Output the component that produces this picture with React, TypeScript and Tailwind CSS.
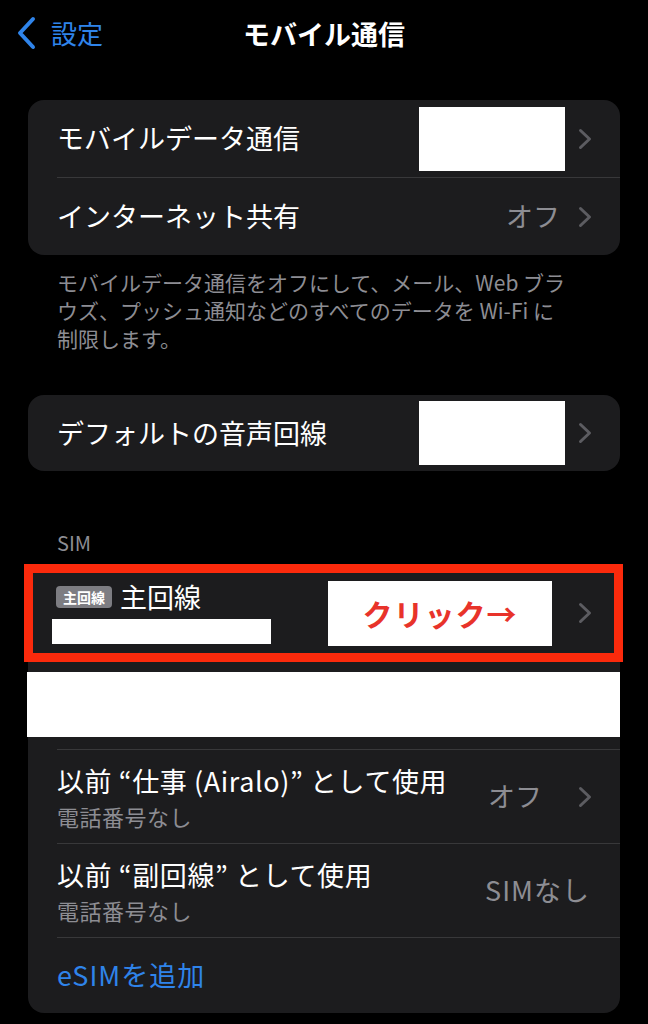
import React from "react";

const Chevron = () => (
  <svg width="14" height="22" viewBox="0 0 14 22" className="shrink-0">
    <polyline points="2.5,2.5 11.5,11 2.5,19.5" fill="none" stroke="#5c5c61" strokeWidth="3" strokeLinecap="round" strokeLinejoin="round" />
  </svg>
);

const Sep = () => <div className="ml-[29px] h-px bg-[#38383a]" />;

export default function App() {
  return (
    <div
      className="w-[648px] h-[1024px] bg-black overflow-hidden text-white"
      style={{ fontFamily: '"Noto Sans CJK JP", "Noto Sans", sans-serif' }}
    >
      {/* Nav */}
      <div className="grid grid-cols-[1fr_auto_1fr] items-center h-[66px]">
        <div className="flex items-center pl-[15px] gap-[14px] text-[#2f84ea]">
          <svg width="22" height="34" viewBox="0 0 22 34">
            <polyline points="18,3 5,17 18,31" fill="none" stroke="#2f84ea" strokeWidth="4" strokeLinecap="round" strokeLinejoin="round" />
          </svg>
          <span className="text-[26px] leading-none">設定</span>
        </div>
        <div className="text-[27px] font-semibold leading-none">モバイル通信</div>
        <div />
      </div>

      {/* Card 1 */}
      <div className="mx-[28px] mt-[34px] rounded-[16px] bg-[#1c1c1e]">
        <div className="flex items-center h-[77px] pl-[29px] pr-[28px]">
          <span className="text-[27px] flex-1">モバイルデータ通信</span>
          <div className="w-[146px] h-[64px] bg-white mr-[13px]" />
          <Chevron />
        </div>
        <Sep />
        <div className="flex items-center h-[77px] pl-[29px] pr-[28px]">
          <span className="text-[27px] flex-1">インターネット共有</span>
          <span className="text-[27px] text-[#8d8d93] mr-[18px]">オフ</span>
          <Chevron />
        </div>
      </div>

      <p className="px-[57px] mt-[13px] text-[21px] leading-[28px] text-[#8d8d93]">
        モバイルデータ通信をオフにして、メール、Web ブラ
        <br />
        ウズ、プッシュ通知などのすべてのデータを Wi-Fi に
        <br />
        制限します。
      </p>

      {/* Card 2 */}
      <div className="mx-[28px] mt-[43px] rounded-[16px] bg-[#1c1c1e]">
        <div className="flex items-center h-[76px] pl-[29px] pr-[28px]">
          <span className="text-[27px] flex-1">デフォルトの音声回線</span>
          <div className="w-[146px] h-[64px] bg-white mr-[13px]" />
          <Chevron />
        </div>
      </div>

      <div className="px-[57px] mt-[58px] text-[20px] leading-[28px] text-[#8d8d93]">SIM</div>

      {/* SIM card */}
      <div className="mx-[28px] mt-[7px] rounded-[16px] bg-[#1c1c1e]">
        <div className="relative h-[98px] flex items-center pl-[24px] pr-[28px]">
          <div className="flex-1 flex flex-col">
            <div className="flex items-center gap-[8px] pl-[4px]">
              <span className="h-[22px] w-[56px] rounded-[4px] bg-[#7d7d82] text-white text-[14px] font-bold leading-[22px] text-center">主回線</span>
              <span className="text-[27px] leading-[30px]">主回線</span>
            </div>
            <div className="mt-[7px] w-[219px] h-[25px] bg-white" />
          </div>
          <div className="w-[224px] h-[65px] bg-white mr-[26px] flex items-center justify-center">
            <span className="text-[#e8332a] text-[30px] font-bold tracking-[1px]">クリック→</span>
          </div>
          <Chevron />
          <div className="absolute -left-[4px] -right-[3px] top-0 bottom-0 border-[9px] border-[#fb2a0c] pointer-events-none" />
        </div>
        <div className="mt-[10px] -ml-px h-[65px] bg-white" />
        <div className="h-[12px]" />
        <Sep />
        <div className="flex items-center h-[93px] pl-[29px] pr-[28px]">
          <div className="flex-1 flex flex-col">
            <div className="text-[27px] leading-[39px] tracking-[0.6px]">以前 “仕事 (Airalo)” として使用</div>
            <div className="text-[22px] leading-[33px] text-[#8d8d93] tracking-[0.5px]">電話番号なし</div>
          </div>
          <span className="text-[27px] text-[#8d8d93] mr-[36px]">オフ</span>
          <Chevron />
        </div>
        <Sep />
        <div className="flex items-center h-[93px] pl-[29px] pr-[30px]">
          <div className="flex-1 flex flex-col">
            <div className="text-[27px] leading-[39px] tracking-[0.6px]">以前 “副回線” として使用</div>
            <div className="text-[22px] leading-[33px] text-[#8d8d93] tracking-[0.5px]">電話番号なし</div>
          </div>
          <span className="text-[27px] tracking-[1px] text-[#8d8d93]">SIMなし</span>
        </div>
        <Sep />
        <div className="flex items-center h-[75px] pl-[29px]">
          <span className="text-[27px] tracking-[1px] text-[#2f84ea]">eSIMを追加</span>
        </div>
      </div>
    </div>
  );
}
